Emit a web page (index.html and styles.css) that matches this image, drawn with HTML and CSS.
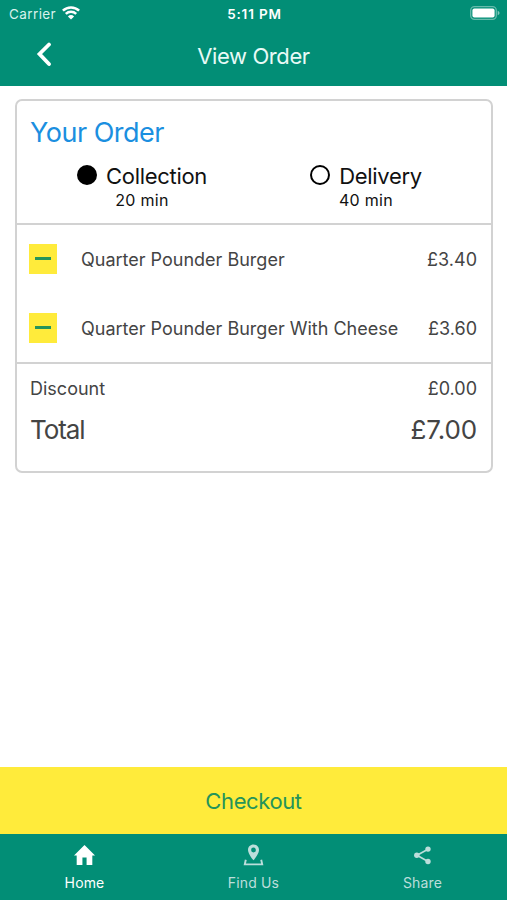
FILE: index.html
```html
<!DOCTYPE html>
<html lang="en">
<head>
<meta charset="utf-8">
<meta name="viewport" content="width=device-width, initial-scale=1">
<title>View Order</title>
<link rel="stylesheet" href="styles.css">
</head>
<body>
<div class="app">
  <header class="header">
    <div class="status">
      <div class="carrier">
        <span>Carrier</span>
        <svg class="wifi" viewBox="0 0 18 14" width="18" height="14"><path d="M.9 4.700a11.600 11.600 0 0 1 16.200 0M3.800 7.900a7.600 7.600 0 0 1 10.400 0" fill="none" stroke="#fff" stroke-width="2.500"/><path d="M9 13.600 5.900 10.500a4.500 4.500 0 0 1 6.200 0z" fill="#fff"/></svg>
      </div>
      <span class="time">5:11 PM</span>
      <div class="battery">
        <svg viewBox="0 0 30 14" width="30" height="14"><rect x=".7" y=".7" width="25.6" height="12.6" rx="3.8" fill="none" stroke="#fff" stroke-opacity=".4" stroke-width="1.3"/><rect x="2.4" y="2.4" width="22.2" height="9.2" rx="2" fill="#fff"/><path d="M27.700 4.800c2.400.9 2.400 3.500 0 4.400z" fill="#fff" fill-opacity=".5"/></svg>
      </div>
    </div>
    <div class="nav">
      <button class="back" aria-label="Back"><svg viewBox="0 0 16 26" width="16" height="26"><path d="M13 2.500 3.500 12 13 22" fill="none" stroke="#fff" stroke-width="3.800" stroke-linecap="round" stroke-linejoin="miter"/></svg></button>
      <h1 class="title">View Order</h1>
    </div>
  </header>

  <main class="content">
    <section class="card">
      <div class="order">
        <h2 class="heading">Your Order</h2>
        <div class="options">
          <div class="option">
            <div class="choice"><span class="radio checked"></span><span class="method">Collection</span></div>
            <span class="duration">20 min</span>
          </div>
          <div class="option">
            <div class="choice"><span class="radio"></span><span class="method">Delivery</span></div>
            <span class="duration">40 min</span>
          </div>
        </div>
      </div>
      <div class="items">
        <div class="item"><button class="remove" aria-label="Remove"></button><span class="name">Quarter Pounder Burger</span><span class="price">£3.40</span></div>
        <div class="item"><button class="remove" aria-label="Remove"></button><span class="name">Quarter Pounder Burger With Cheese</span><span class="price">£3.60</span></div>
      </div>
      <div class="summary">
        <div class="discount"><span>Discount</span><span class="price">£0.00</span></div>
        <div class="total"><span class="label">Total</span><span class="amount">£7.00</span></div>
      </div>
    </section>
  </main>

  <button class="checkout">Checkout</button>
  <nav class="tabs">
    <div class="tab active">
      <svg viewBox="0 0 24 24" width="25" height="25"><path d="M10 21v-7h4v7h5.500v-9h2.600L12 1.800 1.900 12h2.600v9z" fill="currentColor"/></svg>
      <span>Home</span>
    </div>
    <div class="tab">
      <svg viewBox="0 0 25 25" width="25" height="25"><path fill="currentColor" fill-rule="evenodd" d="M12.500 1.500C9.300 1.500 7 3.900 7 6.900c0 4 5.500 10.400 5.500 10.400S18 10.900 18 6.900c0-3-2.300-5.400-5.500-5.400zm0 3.100a2.400 2.400 0 1 1 0 4.800 2.400 2.400 0 0 1 0-4.800z"/><path d="M4.800 16.700 3.800 21.400h17.400l-1-4.700" fill="none" stroke="currentColor" stroke-width="1.900"/></svg>
      <span>Find Us</span>
    </div>
    <div class="tab">
      <svg viewBox="0 0 25 25" width="25" height="25"><path d="M18 6.200 7 12.300l11 6.100" fill="none" stroke="currentColor" stroke-width="1.700"/><g fill="currentColor"><circle cx="18" cy="6.100" r="2.700"/><circle cx="6.800" cy="12.300" r="2.700"/><circle cx="18" cy="18.500" r="2.700"/></g></svg>
      <span>Share</span>
    </div>
  </nav>
</div>
</body>
</html>
```
FILE: styles.css
```css
* { box-sizing: border-box; }
body {
  margin: 0;
  background: #fff;
  color: #444;
  font-family: Inter, "Liberation Sans", sans-serif;
}
h1, h2 { margin: 0; font-weight: 400; }
button { padding: 0; border: 0; background: none; font: inherit; }
svg { display: block; }
.app { display: flex; flex-direction: column; width: 100%; height: 900px; }

.header { height: 86px; background: #028e76; color: #fff; }
.status {
  display: grid;
  grid-template-columns: 1fr auto 1fr;
  align-items: center;
  height: 27px;
  padding: 0 7px 0 9px;
  font-size: 13.5px;
}
.carrier { display: flex; align-items: center; gap: 6px; color: #d8f2ec; letter-spacing: .4px; }
.wifi { margin-top: -1px; }
.time { font-weight: 600; letter-spacing: .85px; }
.battery { display: flex; justify-content: flex-end; margin-top: -1px; }
.nav {
  display: grid;
  grid-template-columns: 90px 1fr 90px;
  align-items: center;
  height: 58px;
}
.back { padding-left: 36px; margin-top: -2px; }
.title { text-align: center; font-size: 22px; line-height: 30px; letter-spacing: -.4px; color: #e8faf6; }

.content { flex: 1; padding: 13px 14px 0 15px; }
.card { height: 374px; border: 2px solid #d2d2d2; border-radius: 7px; }
.order { height: 124px; padding: 14px 13px 0; border-bottom: 2px solid #d2d2d2; }
.heading { color: #1b8fe0; font-size: 27px; line-height: 35px; letter-spacing: -.5px; }
.options { display: grid; grid-template-columns: 1fr 1fr; margin-top: 13px; color: #111; }
.option { display: flex; flex-direction: column; align-items: center; }
.choice { display: flex; align-items: center; gap: 9px; height: 26px; }
.radio { width: 20px; height: 20px; margin-bottom: 2px; border: 2px solid #000; border-radius: 50%; }
.radio.checked { background: #000; }
.method { font-size: 22px; line-height: 26px; letter-spacing: -.3px; }
.duration { margin-top: 1px; font-size: 16px; line-height: 21px; letter-spacing: .3px; }
.items { height: 139px; border-bottom: 2px solid #d2d2d2; }
.item { display: flex; align-items: center; height: 69px; padding: 0 14px 0 12px; font-size: 18px; }
.remove {
  display: flex;
  justify-content: center;
  width: 28px;
  height: 30px;
  margin-bottom: 2px;
  padding-top: 13px;
  background: #ffeb3b;
}
.remove::before { content: ""; width: 16px; height: 3px; background: #25945a; }
.name { margin-left: 24px; }
.item .price { margin-left: auto; }
.summary { padding: 13px 14px 0 13px; }
.discount, .total { display: flex; justify-content: space-between; }
.discount { font-size: 18px; line-height: 24px; }
.total { margin-top: 11px; font-size: 26px; line-height: 35px; }
.label { letter-spacing: -1.1px; }
.amount { letter-spacing: -.1px; }

.checkout { height: 67px; background: #ffeb3b; color: #25945a; font-size: 22px; letter-spacing: -.4px; }
.tabs { display: grid; grid-template-columns: repeat(3, 1fr); height: 66px; background: #028e76; }
.tab { display: flex; flex-direction: column; align-items: center; padding-top: 9px; color: #bcdedb; font-size: 14px; }
.tab span { margin-top: 5px; line-height: 19px; letter-spacing: .15px; }
.tab.active { color: #fff; }
```
